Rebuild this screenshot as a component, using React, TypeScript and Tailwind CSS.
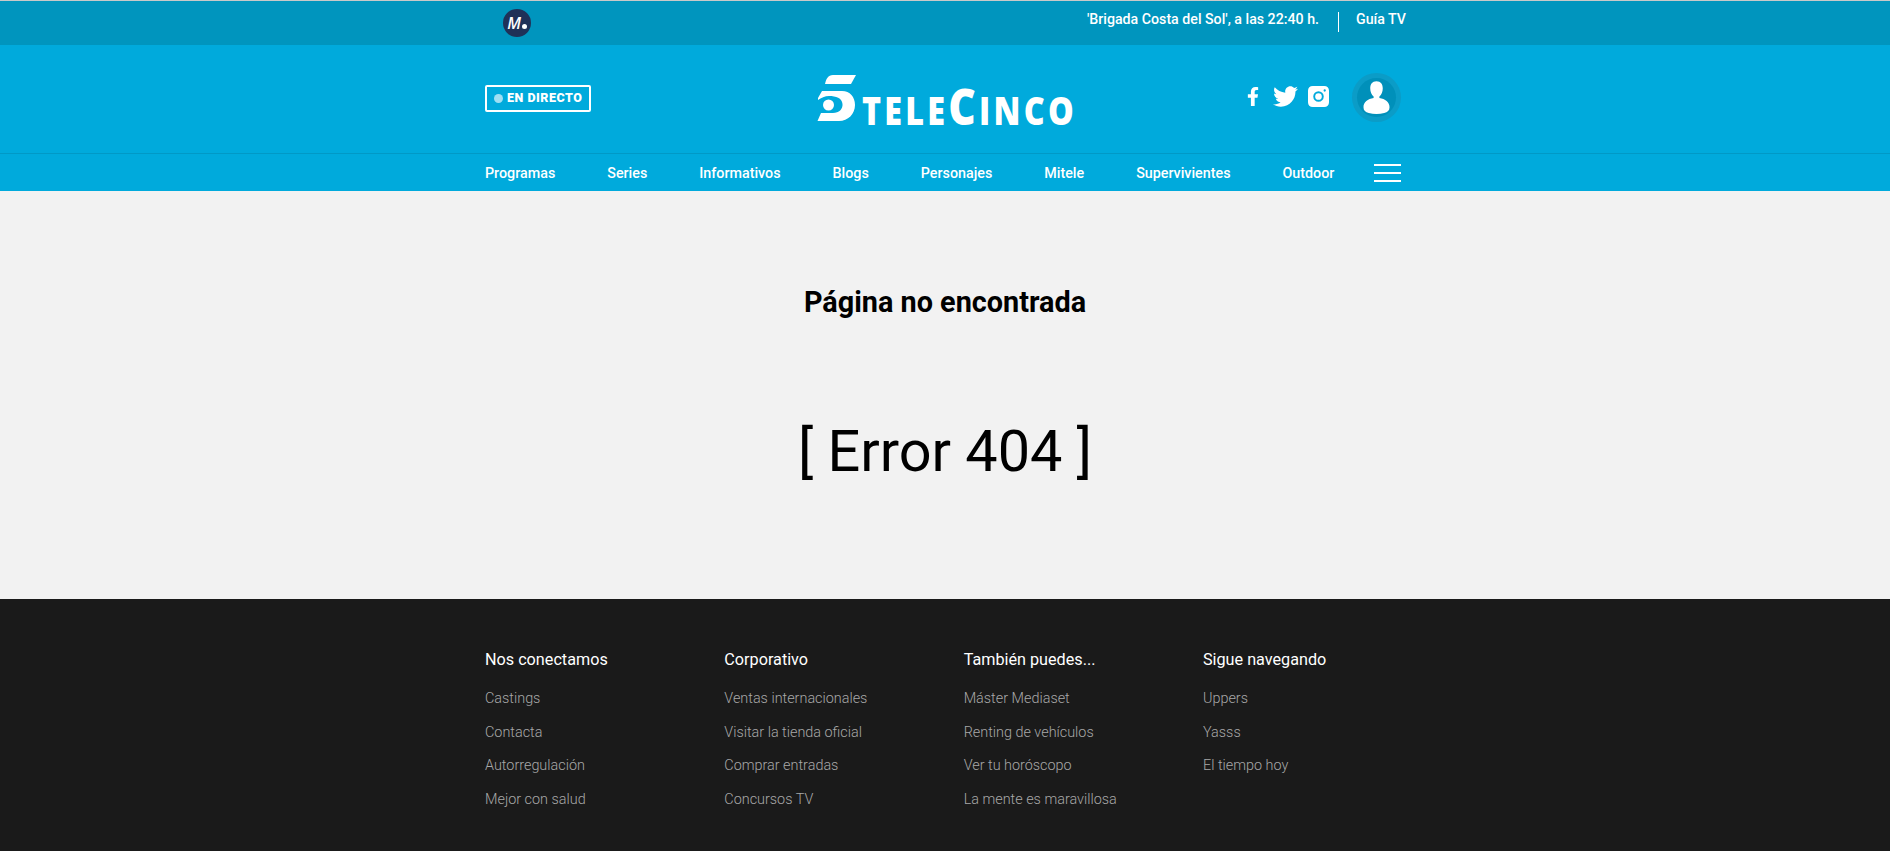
import { FaFacebookF, FaTwitter } from "react-icons/fa";

const navItems = ["Programas", "Series", "Informativos", "Blogs", "Personajes", "Mitele", "Supervivientes", "Outdoor"];

const footerColumns = [
  { title: "Nos conectamos", links: ["Castings", "Contacta", "Autorregulación", "Mejor con salud"] },
  { title: "Corporativo", links: ["Ventas internacionales", "Visitar la tienda oficial", "Comprar entradas", "Concursos TV"] },
  { title: "También puedes...", links: ["Máster Mediaset", "Renting de vehículos", "Ver tu horóscopo", "La mente es maravillosa"] },
  { title: "Sigue navegando", links: ["Uppers", "Yasss", "El tiempo hoy"] },
];

function FiveMark() {
  return (
    <svg viewBox="0 0 40 48" className="w-10 h-12 shrink-0" fill="#fff">
      <path d="M8 10C9 5 11 1 16 1H39L34 10Z" />
      <path d="M5 17H25C33 17 38 23 38 31C38 40 31 47 22 47H0.500L4 39H16C22 39 26 35 25.500 30C25 24 19 22 12 22C8 22 4 24 1 26L1 24Z" />
      <circle cx="11.500" cy="31" r="5.500" />
    </svg>
  );
}

function Logo() {
  return (
    <div className="flex items-end justify-center h-12">
      <FiveMark />
      <div className="ml-[5px] w-[210px] h-[27px] mb-[2px] font-['Open_Sans',sans-serif] font-extrabold text-white text-[38px] leading-[27px] tracking-[3.8px]">
        <span className="inline-block origin-left scale-x-[0.85] whitespace-nowrap">
          TELE<span className="text-[50px]">C</span>INCO
        </span>
      </div>
    </div>
  );
}

function InstagramIcon() {
  return (
    <svg viewBox="0 0 22 22" className="w-[21px] h-[21px] mb-[2px]">
      <path
        fill="#fff"
        fillRule="evenodd"
        d="M5 0H17C20 0 22 2 22 5V17C22 20 20 22 17 22H5C2 22 0 20 0 17V5C0 2 2 0 5 0ZM11 5.500A5.500 5.500 0 1 0 11 16.500A5.500 5.500 0 1 0 11 5.500ZM11 7.500A3.500 3.500 0 1 1 11 14.500A3.500 3.500 0 1 1 11 7.500ZM17.500 3.500A1.200 1.200 0 1 0 17.500 5.900A1.200 1.200 0 1 0 17.500 3.500Z"
      />
    </svg>
  );
}

function UserAvatar() {
  return (
    <div className="w-[49px] h-[49px] rounded-full bg-[#0b9cc7] flex items-center justify-center">
      <div className="w-[39px] h-[39px] rounded-full bg-[#0090ba] flex items-center justify-center">
        <svg viewBox="0 0 28 35" className="w-[27px] h-[34px]" fill="#fff">
          <path d="M14 0C9.500 0 7.500 3 7.500 7.500C7.500 11 8.800 14.500 11 16V17.500C5 18.500 0.500 21.500 0.500 27C0.500 30.500 2.500 32 6 33C11 34.500 17 34.500 22 33C25.500 32 27.500 30.500 27.500 27C27.500 21.500 23 18.500 17 17.500V16C19.200 14.500 20.500 11 20.500 7.500C20.500 3 18.500 0 14 0Z" />
        </svg>
      </div>
    </div>
  );
}

export default function App() {
  return (
    <div className="min-h-[851px] flex flex-col bg-[#f2f2f2] font-['Roboto',sans-serif]">
      <header className="bg-[#00aadc] text-white border-t border-[#c9c9c9]">
        {/* Top strip */}
        <div className="bg-[#0095be] h-11">
          <div className="w-[920px] mx-auto h-full flex items-center justify-between">
            <div className="ml-[18px] w-7 h-7 rounded-full bg-[#1f3158] flex items-center justify-center gap-[1px]">
              <span className="text-[16px] leading-none font-semibold italic font-['Open_Sans',sans-serif]">M</span>
              <span className="w-[5px] h-[5px] rounded-full bg-white mt-1.5" />
            </div>
            <div className="flex items-center text-[14.2px] font-medium mr-[-1px]">
              <span className="mb-[6px]">'Brigada Costa del Sol', a las 22:40 h.</span>
              <span className="w-px h-5 bg-white ml-[19px] mr-[17px] mb-[1px]" />
              <span className="mb-[6px]">Guía TV</span>
            </div>
          </div>
        </div>

        {/* Brand row */}
        <div className="h-[109px] border-b border-[#0099c6]">
          <div className="w-[920px] mx-auto h-full pb-[3px] grid grid-cols-3 items-center">
            <div className="mt-[2px]">
              <div className="inline-flex items-center gap-[4px] h-[27px] w-[106px] border-2 border-white rounded-[2px] pl-[7px]">
                <span className="w-[9px] h-[9px] rounded-full bg-[#9fdff3]" />
                <span className="text-[12.5px] font-black tracking-[0.5px]">EN DIRECTO</span>
              </div>
            </div>
            <Logo />
            <div className="flex items-center justify-end gap-[10px] pr-1">
              <FaFacebookF className="w-[12px] h-[21px] mb-[3px] mr-[4px]" />
              <FaTwitter className="w-[25px] h-[25px] mb-[3px]" />
              <InstagramIcon />
              <div className="ml-[13px]">
                <UserAvatar />
              </div>
            </div>
          </div>
        </div>

        {/* Nav */}
        <nav className="h-[37px]">
          <div className="w-[920px] mx-auto h-full flex items-center justify-between pr-1">
            <div className="flex items-center gap-[52px] text-[14.3px] font-medium pt-[2px]">
              {navItems.map((item) => (
                <span key={item}>{item}</span>
              ))}
            </div>
            <div className="w-[27px] flex flex-col gap-[6px]">
              <span className="h-0.5 bg-white" />
              <span className="h-0.5 bg-white" />
              <span className="h-0.5 bg-white" />
            </div>
          </div>
        </nav>
      </header>

      <main className="h-[408px] flex flex-col items-center text-black">
        <h1 className="mt-[94px] text-[28.8px] leading-[34px] font-bold">Página no encontrada</h1>
        <p className="mt-[98px] text-[57.6px] leading-[70px] font-normal">[ Error 404 ]</p>
      </main>

      <footer className="bg-[#1a1a1a] flex-1 pt-[51px]">
        <div className="w-[920px] mx-auto grid grid-cols-[239.33px_239.33px_239.33px_1fr]">
          {footerColumns.map((col) => (
            <div key={col.title}>
              <h3 className="text-[16.2px] leading-[20px] text-white">{col.title}</h3>
              <ul className="mt-[12px] text-[14.4px] font-light text-[#a8a8a8]">
                {col.links.map((link) => (
                  <li key={link} className="h-[33.7px] leading-[33.7px]">{link}</li>
                ))}
              </ul>
            </div>
          ))}
        </div>
      </footer>
    </div>
  );
}
